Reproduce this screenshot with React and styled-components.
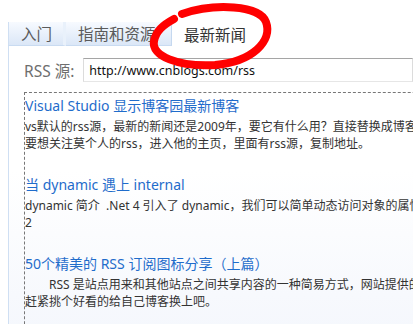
import React from 'react';
import styled, { createGlobalStyle } from 'styled-components';

const GlobalStyle = createGlobalStyle`
  html, body {
    margin: 0;
    padding: 0;
    background: #ffffff;
    overflow: hidden;
  }
  body {
    font-family: "Noto Sans", "Noto Sans CJK SC", sans-serif;
  }
`;

const Page = styled.div`
  position: relative;
  width: 413px;
  height: 324px;
  padding: 22px 0 0 8px;
  box-sizing: border-box;
  overflow: hidden;
`;

const TabBar = styled.div`
  display: flex;
  align-items: stretch;
  height: 24px;
  width: 700px;
`;

const Tab = styled.div`
  display: flex;
  align-items: center;
  box-sizing: border-box;
  width: ${p => p.width}px;
  padding-left: ${p => p.pad}px;
  font-size: 15.5px;
  color: ${p => (p.active ? '#333' : '#5a5a5a')};
  white-space: nowrap;
  background: ${p => (p.active ? '#ffffff' : 'linear-gradient(#f7faff, #dbe7f7)')};
  border-left: ${p => (p.first ? '1px solid #cfdff3' : 'none')};
  border-right: ${p => (p.active ? 'none' : p.edge ? '1px solid #c5d8ef' : '3px solid #e9f1fb')};
  border-bottom: ${p => (p.active ? 'none' : '1px solid #c9dbf1')};
`;

const Panel = styled.div`
  border-left: 1px solid #cfdff3;
  padding: 12px 0 0 15px;
  height: 300px;
  background: linear-gradient(#ffffff 40%, #f3f6fc);
`;

const FieldRow = styled.div`
  display: flex;
  align-items: center;
  gap: 9px;
`;

const Label = styled.span`
  font-size: 15.5px;
  color: #6e6e6e;
  white-space: nowrap;
`;

const UrlInput = styled.div`
  box-sizing: border-box;
  width: 400px;
  height: 24px;
  padding-left: 5px;
  display: flex;
  align-items: center;
  background: #ffffff;
  border: 1px solid #dcdcdc;
  border-top-color: #a5a5a5;
  border-bottom-color: #e6e6e6;
  font-size: 12.5px;
  color: #111;
  white-space: nowrap;
`;

const NewsList = styled.div`
  margin-top: 10px;
  padding-top: 1px;
  border-top: 1px dashed #777;
  border-left: 1px dashed #777;
  width: 600px;
  height: 300px;
`;

const NewsItem = styled.div`
  margin-bottom: 21px;
`;

const NewsTitle = styled.div`
  font-size: 14px;
  line-height: 24px;
  color: #1f6ccb;
  white-space: nowrap;
`;

const DescLine = styled.div`
  font-size: 12px;
  line-height: 17px;
  color: #333;
  white-space: pre;
`;

const Scribble = styled.svg`
  position: absolute;
  left: 0;
  top: 0;
  pointer-events: none;
`;

const news = [
  {
    title: 'Visual Studio 显示博客园最新博客',
    lines: [
      'vs默认的rss源，最新的新闻还是2009年，要它有什么用？直接替换成博客园的rss吧。',
      '要想关注莫个人的rss，进入他的主页，里面有rss源，复制地址。',
    ],
  },
  {
    title: '当 dynamic 遇上 internal',
    lines: ['dynamic 简介  .Net 4 引入了 dynamic，我们可以简单动态访问对象的属性', '2'],
  },
  {
    title: '50个精美的 RSS 订阅图标分享（上篇）',
    lines: [
      '\u3000\u3000RSS 是站点用来和其他站点之间共享内容的一种简易方式，网站提供的RSS订阅图标',
      '赶紧挑个好看的给自己博客换上吧。',
    ],
  },
];

export default function App() {
  return (
    <>
      <GlobalStyle />
      <Page>
        <TabBar>
          <Tab first width={58} pad={12}>入门</Tab>
          <Tab edge width={106} pad={12}>指南和资源</Tab>
          <Tab active width={120} pad={12}>最新新闻</Tab>
        </TabBar>
        <Panel>
          <FieldRow>
            <Label>RSS 源:</Label>
            <UrlInput>http://www.cnblogs.com/rss</UrlInput>
          </FieldRow>
          <NewsList>
            {news.map(item => (
              <NewsItem key={item.title}>
                <NewsTitle>{item.title}</NewsTitle>
                {item.lines.map((line, i) => (
                  <DescLine key={i}>{line}</DescLine>
                ))}
              </NewsItem>
            ))}
          </NewsList>
        </Panel>
        <Scribble width="413" height="80" viewBox="0 0 413 80">
          <path
            d="M182 14 C 214 3, 260 5, 266 22 C 273 41, 252 62, 215 65 C 178 67, 151 56, 154 41 C 156 31, 163 25, 174 19"
            fill="none"
            stroke="#ff0000"
            strokeWidth="8"
            strokeLinecap="round"
          />
        </Scribble>
      </Page>
    </>
  );
}
